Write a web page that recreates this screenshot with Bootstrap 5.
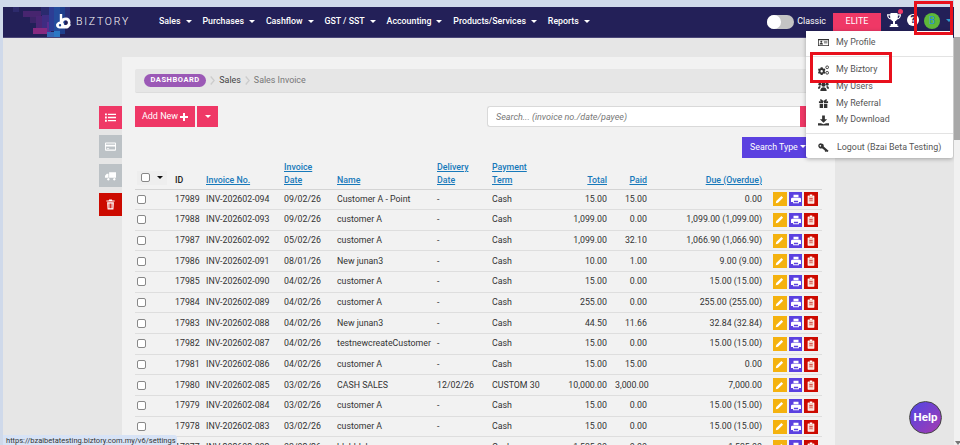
<!DOCTYPE html>
<html lang="en">
<head>
<meta charset="utf-8">
<title>Biztory - Sales Invoice</title>
<link href="https://cdn.jsdelivr.net/npm/bootstrap@5.3.0/dist/css/bootstrap.min.css" rel="stylesheet">
<style>
html,body{height:445px;overflow:hidden}
body{font-family:Roboto,"Liberation Sans",sans-serif;font-size:8.8px;color:#333;background:#e6e6e6}
.shell{position:relative;flex:1 1 auto;min-width:0;height:445px;padding:7px 0 0 3px;background:#cfd9ea;overflow:hidden}
.rail{width:6px;height:445px;background:#f1f1f1;position:relative;flex:none}
.rail-thumb{height:103px;margin-top:37px;background:#a8a8a8}
.rail-down{position:absolute;left:1px;bottom:0;width:0;height:0;border:3px solid transparent;border-top:4px solid #777;border-bottom:0}
.topbar{height:30.5px;background:#232058;padding:0;flex-wrap:nowrap;border-bottom:1px solid #4a4678;justify-content:flex-start;color:#fff;position:relative}
.mosaic{position:absolute;left:0;top:0}
.brand-box{position:relative;display:flex;align-items:center;width:156px;padding-left:53px;height:100%;color:#fff;font-size:10.5px;letter-spacing:1.8px;font-weight:300;text-decoration:none}
.brand-box svg{margin-right:5px}
.topmenu{display:flex;gap:0;margin:0;padding:0;list-style:none}
.topmenu a{display:block;color:#fff;text-decoration:none;font-size:8.8px;font-weight:500;white-space:nowrap}
.topmenu li{margin-right:10.9px}
.crt{display:inline-block;width:0;height:0;margin-left:5px;vertical-align:1.5px;border:3px solid transparent;border-top:3px solid currentColor;border-bottom:0}
.top-right{margin-left:auto;display:flex;align-items:center;height:100%;padding-right:2px;color:#fff}
.sw{width:27px;height:14px;border-radius:8px;background:#c4c4c4;position:relative;margin-right:3px}
.sw::before{content:"";position:absolute;left:0;top:0;width:14px;height:14px;border-radius:50%;background:#fff}
.classic-lbl{font-size:8.9px;margin-right:7px}
.elite{width:48px;height:24px;margin-top:6px;padding-bottom:6px;background:#ef3866;color:#fff;font-size:9px;font-weight:400;display:flex;align-items:center;justify-content:center;margin-right:6px}
.tro{position:relative;width:14px;height:16px;margin-right:6px;margin-bottom:4px}
.tro::after{content:"";position:absolute;right:-2px;top:-3px;width:5px;height:5px;border-radius:50%;background:#ef3866}
.qm{width:12px;height:12px;border-radius:50%;background:#fff;color:#232058;font-size:10px;font-weight:900;line-height:12px;text-align:center;margin-right:5px;margin-bottom:4px}
.ava{width:16px;height:16px;border-radius:50%;background:#5eb739;color:#2a8fd6;font-size:10px;text-align:center;line-height:16px;margin-right:6px;margin-bottom:2px}
.ava-c{color:#2f9bd0;margin-bottom:2px}
.ava-c .crt{margin:0;display:block}
.main-area{display:flex;align-items:flex-start;padding:19.5px 119px 0 96px;background:#e6e6e6;height:410px}
.side-tools{flex:none;width:23px;padding-top:49px;display:flex;flex-direction:column;gap:6px}
.stool{width:23px;height:23px;display:flex;align-items:center;justify-content:center;color:#fff}
.s-pink{background:#ef3866}.s-grey{background:#bcc2c6}.s-red{background:#cc0a00}
.sheet{flex:1 1 auto;min-width:0;height:400px;background:#f2f2f2;padding:12px 13px 0;overflow:hidden}
.crumbs{height:24px;background:#e6e6e6;border-bottom:1px solid #ddd;border-radius:2px;display:flex;align-items:center;padding-left:9px;margin-bottom:13px;font-size:8.9px;color:#444}
.pill-dash{background:#9b59b6;color:#fff;border-radius:9px;font-size:7.5px;font-weight:700;letter-spacing:.55px;padding:0 6.5px;height:12.5px;line-height:12.5px}
.chev{width:5px;height:9px;margin:0 4px;color:#ccc}
.crumbs .dim{color:#777}
.tool-row{display:flex;align-items:flex-start;height:21px}
.pbtn{background:#ef3866;color:#fff;border:0;border-radius:0;height:21px;font-size:9px;padding:0;display:flex;align-items:center;justify-content:center}
.add-btn{width:60px;margin-right:2px}
.add-btn svg{margin-left:2px}
.add-caret{width:21px}
.srch{margin-left:auto;width:313px;height:21px;background:#fff;border:1px solid #d9d9d9;border-right:0;border-radius:3px 0 0 3px;font-size:9px;font-style:italic;padding:0 8px;box-shadow:none}
.srch::placeholder{color:#777}
.srch-go{width:22px;height:21px;background:#ef3866;flex:none}
.type-row{display:flex;justify-content:flex-end;margin-top:10px;height:21px;padding-right:12px}
.type-btn{width:68px;height:21px;background:#5b41e0;color:#fff;border:0;border-radius:0;font-size:8.8px;padding:0 0 0 8px;text-align:left}
.type-btn .crt{margin-left:2px}
.inv-table{table-layout:fixed;width:687px;margin:2px 0 0;font-size:8.8px;color:#333;border-collapse:collapse;--bs-table-bg:transparent}
.inv-table>thead>tr>th{height:29px;padding:0 4px;border-bottom:1px solid #d4d4d4;font-weight:500;line-height:13px;vertical-align:bottom;padding-bottom:2px;color:#222}
.inv-table>tbody>tr>td{height:20.67px;padding:0 4px;border-bottom:1px solid #dedede;vertical-align:middle;white-space:nowrap;overflow:hidden}
.inv-table th a{color:#1779ba;text-decoration:underline}
.inv-table td.c0{padding-left:2px}
.inv-table .form-check-input{width:9px;height:9px;margin:0;display:block;border-color:#888;border-radius:2px;background-color:#fff}
.sel-all{display:flex;align-items:center;width:30px;height:14px;background:#eee;margin-left:-2px;margin-bottom:2px;padding-left:4px}
.sel-all .crt{color:#111;margin-left:7px;vertical-align:0}
.acts{display:flex;gap:2px;padding-left:3px}
.ab{width:14px;height:14px;display:flex;align-items:center;justify-content:center;color:#fff}
.ab-y{background:#f4b20f}.ab-b{background:#5b41e0}.ab-r{background:#cc0a00}
.user-menu{position:absolute;left:806px;top:31px;width:147px;height:127px;background:#fff;box-shadow:0 1px 4px rgba(0,0,0,.3);border-radius:0 0 2px 2px;color:#555;font-size:8.9px;padding:0;z-index:5;list-style:none;margin:0}
.mi{display:flex;align-items:center;height:16.7px;padding-left:12px;color:#555;text-decoration:none}
.mi svg{width:11px;height:11px;margin-right:7px;flex:none;color:#333}
.mi-first{margin-top:3px}
.msep{height:1px;background:#e3e3e3;margin:5px 0 5px}
.flagbox{position:absolute;border:3px solid #e8101c;z-index:6}
.flag-a{left:914px;top:1px;width:39px;height:34px}
.flag-b{left:810px;top:52px;width:82px;height:31px}
.fab{position:absolute;left:909px;top:401px;width:33px;height:33px;border-radius:50%;background:linear-gradient(135deg,#4f46e5,#a63ab0);border:1px solid #444;color:#fff;font-size:11.5px;font-weight:700;display:flex;align-items:center;justify-content:center;z-index:6}
.url-tip{position:absolute;left:3px;top:435px;height:10px;width:174px;background:#d7e3f6;color:#333;font-size:7.5px;line-height:12px;padding-left:3px;white-space:nowrap;overflow:hidden;z-index:7;border-radius:0 3px 0 0}
</style>
</head>
<body class="d-flex">
<svg width="0" height="0" class="position-absolute">
<defs>
<symbol id="i-list" viewBox="0 0 12 12"><path fill="currentColor" d="M0 1.500h2v2H0zM3.200 1.800H12v1.400H3.200zM0 5h2v2H0zM3.200 5.300H12v1.400H3.200zM0 8.500h2v2H0zM3.200 8.800H12v1.400H3.200z"/></symbol>
<symbol id="i-card" viewBox="0 0 12 12"><path fill="currentColor" fill-rule="evenodd" d="M1 1.500h10a1 1 0 0 1 1 1v7a1 1 0 0 1-1 1H1a1 1 0 0 1-1-1v-7a1 1 0 0 1 1-1zm0 1.300v1.300h10V2.800zm0 3.100v3.300h10V5.900zm1 1.800h2.500v.8H2z"/></symbol>
<symbol id="i-truck" viewBox="0 0 12 12"><path fill="currentColor" d="M4.500 2.500H12v6H4.500zM3.800 4.200H2L0 6.300v2.200h3.800zM3 9a1.300 1.300 0 1 1 0 2.200 1.300 1.300 0 0 1 0-2.200zM9.500 9a1.300 1.300 0 1 1 0 2.200 1.300 1.300 0 0 1 0-2.200z"/></symbol>
<symbol id="i-trash" viewBox="0 0 12 12"><path fill="currentColor" fill-rule="evenodd" d="M4.500.5h3l.5 1h2.500v1.300h-9V1.500H4zM2.300 3.500h7.400l-.5 8H2.800zM4 5v5h.9V5zm1.600 0v5h.9V5zM7.100 5v5H8V5z"/></symbol>
<symbol id="i-clip" viewBox="0 0 12 12"><path fill="#f5c9b8" d="M2.500 2h7v9.500h-7z"/><path fill="currentColor" d="M4.500.5h3v2h-3zM2 2h1.800v1.200H3.200v7.100h5.600V3.200h-.6V2H10v9.500H2z"/><path fill="#c33" d="M4 5h4v.9H4zM4 7h4v.9H4z"/></symbol>
<symbol id="i-pen" viewBox="0 0 12 12"><path fill="currentColor" d="M8.500 1.200l2.300 2.300-6.800 6.800-3 .7.700-3z"/></symbol>
<symbol id="i-print" viewBox="0 0 12 12"><path fill="currentColor" fill-rule="evenodd" d="M3 1h6v3H3zM1.500 4.500h9A1.500 1.500 0 0 1 12 6v3.500H9.500V11h-7V9.500H0V6a1.500 1.500 0 0 1 1.500-1.500zM3.500 8v2h5V8z"/></symbol>
<symbol id="i-id" viewBox="0 0 14 12"><path fill="currentColor" fill-rule="evenodd" d="M0 1.500h14v9H0zM1 3v6.500h12V3zM4.200 3.800a1.300 1.300 0 1 1 0 2.600 1.300 1.300 0 0 1 0-2.600zM2 8.500c0-1.200 1-1.800 2.200-1.800s2.200.6 2.200 1.800zM7.500 4.300H12v.9H7.500zM7.500 6H12v.9H7.500z"/></symbol>
<symbol id="i-cogs" viewBox="0 0 12 12"><path fill="currentColor" fill-rule="evenodd" d="M3 2.500h2l.3 1.100.9.500 1.100-.3.8 1.600-.8.800v1l.8.800-.8 1.600-1.100-.3-.9.500L5 11H3l-.3-1.200-.9-.5-1.100.3-.7-1.600.8-.8v-1l-.8-.8.700-1.600 1.100.3.900-.5zM4 5.500a1.300 1.300 0 1 0 0 2.600 1.300 1.300 0 0 0 0-2.600z"/><circle cx="10" cy="2.500" r="1.500" fill="none" stroke="currentColor"/><circle cx="10" cy="8.500" r="1.500" fill="none" stroke="currentColor"/></symbol>
<symbol id="i-users" viewBox="0 0 12 12"><circle cx="6" cy="4" r="2.300" fill="currentColor"/><circle cx="2" cy="3.500" r="1.600" fill="currentColor"/><circle cx="10" cy="3.500" r="1.600" fill="currentColor"/><path fill="currentColor" d="M2.500 11c0-3 1.500-4.300 3.500-4.300S9.500 8 9.500 11zM0 8.500c0-2 .8-3 2.300-3l.7 1C2.200 7.200 2 8 1.800 8.500zM12 8.500c0-2-.8-3-2.300-3l-.7 1c.8.700 1 1.500 1.200 2z"/></symbol>
<symbol id="i-gift" viewBox="0 0 12 12"><path fill="currentColor" d="M1 3.500h4.500v2H1zM6.500 3.500H11v2H6.500zM1.800 6.300h3.700V11H1.800zM6.500 6.300h3.700V11H6.500zM3 1l3 2.300L9 1l1 1.500-2 1.300H4L2 2.500z"/></symbol>
<symbol id="i-dl" viewBox="0 0 12 12"><path fill="currentColor" d="M4.500.5h3v4H10L6 8.500 2 4.500h2.500zM0 9h3.200L6 10l2.800-1H12v2.500H0z"/></symbol>
<symbol id="i-key" viewBox="0 0 12 12"><path fill="currentColor" fill-rule="evenodd" d="M3.500 1.500a2.800 2.800 0 0 1 2.700 3.500l5.300 4.500-1 1.500-1.200-.7-.8.600-1-.8-.2-1-3-2.300A2.800 2.800 0 1 1 3.500 1.500zM2.600 3.300a.9.900 0 1 0 0 1.800.9.900 0 0 0 0-1.800z"/></symbol>
<symbol id="i-trophy" viewBox="0 0 14 16"><path fill="currentColor" d="M3.500 1h7v1.200H14c0 3-1.300 4.800-3.900 5.300C9.500 8.500 8.700 9 8 9.300V12h2.300v1.800h1V15H2.700v-1.200h1V12H6V9.300c-.7-.3-1.500-.8-2.100-1.800C1.300 7 0 5.200 0 2.200h3.500zM1.300 3.400c.1 1.500.8 2.500 2 2.900-.1-.9-.2-1.900-.2-2.900zM12.700 3.400h-1.800c0 1-.1 2-.2 2.900 1.200-.4 1.900-1.400 2-2.900z"/></symbol>
</defs>
</svg>
<div class="shell">
<nav class="navbar topbar">
<svg class="mosaic" width="76" height="30" aria-hidden="true"><rect x="10" y="0" width="6" height="5" fill="#2d2a6c"/><rect x="20" y="4" width="18" height="6" fill="#47256f"/><rect x="27" y="10" width="6" height="6" fill="#3b2468"/><rect x="33" y="9" width="6" height="12" fill="#4b2575"/><rect x="30" y="21" width="14" height="6" fill="#872a80"/><rect x="38" y="0" width="8" height="8" fill="#2a2a6e"/><rect x="39" y="8" width="7" height="13" fill="#3f2c82"/><rect x="44" y="15" width="4" height="10" fill="#5a2d8e"/><rect x="46" y="0" width="5" height="24" fill="#2d3d94"/><rect x="51" y="0" width="6" height="30" fill="#244c9c"/><rect x="57" y="0" width="5" height="27" fill="#1f3f8c"/><rect x="62" y="0" width="5" height="14" fill="#2a2f78"/><rect x="44" y="25" width="7" height="5" fill="#3567b5"/><rect x="51" y="24" width="6" height="6" fill="#2b78c4"/></svg>
<a class="brand-box" href="#"><svg width="15" height="15" viewBox="0 0 15 15" aria-hidden="true"><path fill="#fff" fill-rule="evenodd" d="M3.800 0h2.400v4.500C7.300 3.800 8.600 3.500 10 3.500c2.600 0 4.500 2 4.500 4.700 0 .7-.1 1.300-.4 1.900L15 11l-1.200 1.200c-1 1.700-2 2.300-3.800 2.300H4C1.700 14.500 0 13 0 11c0-1.500 1.500-3 3.800-3.500zM4 10a1.200 1.200 0 1 0 0 2.400A1.200 1.200 0 0 0 4 10zM9.800 6.200C8.500 6.200 7.500 7 7.200 8.500c.6.700 1 1.500 1.100 2.500h1.600c1.200 0 2-1.200 2-2.500 0-1.300-.9-2.300-2.100-2.300z"/></svg>BIZTORY</a>
<ul class="topmenu">
<li><a href="#">Sales<span class="crt"></span></a></li>
<li><a href="#">Purchases<span class="crt"></span></a></li>
<li><a href="#">Cashflow<span class="crt"></span></a></li>
<li><a href="#">GST / SST<span class="crt"></span></a></li>
<li><a href="#">Accounting<span class="crt"></span></a></li>
<li><a href="#">Products/Services<span class="crt"></span></a></li>
<li><a href="#">Reports<span class="crt"></span></a></li>
</ul>
<div class="top-right">
<div class="sw"></div><span class="classic-lbl">Classic</span>
<div class="elite">ELITE</div>
<div class="tro"><svg width="14" height="16" aria-hidden="true"><use href="#i-trophy"/></svg></div>
<div class="qm">?</div>
<div class="ava">B</div>
<div class="ava-c"><span class="crt"></span></div>
</div>
</nav>
<div class="main-area">
<div class="side-tools">
<div class="stool s-pink"><svg width="11" height="11"><use href="#i-list"/></svg></div>
<div class="stool s-grey"><svg width="11" height="11"><use href="#i-card"/></svg></div>
<div class="stool s-grey"><svg width="11" height="11"><use href="#i-truck"/></svg></div>
<div class="stool s-red"><svg width="11" height="11"><use href="#i-trash"/></svg></div>
</div>
<div class="sheet">
<div class="crumbs"><span class="pill-dash">DASHBOARD</span><svg class="chev" viewBox="0 0 5 9"><path d="M.7.5l3.500 4-3.500 4" fill="none" stroke="currentColor" stroke-width="1.300"/></svg><span>Sales</span><svg class="chev" viewBox="0 0 5 9"><path d="M.7.5l3.500 4-3.500 4" fill="none" stroke="currentColor" stroke-width="1.300"/></svg><span class="dim">Sales Invoice</span></div>
<div class="tool-row">
<button class="btn pbtn add-btn" type="button">Add New<svg width="8" height="8" viewBox="0 0 8 8"><path fill="#fff" d="M3 0h2v3h3v2H5v3H3V5H0V3h3z"/></svg></button>
<button class="btn pbtn add-caret" type="button"><span class="crt m-0"></span></button>
<input class="form-control srch" placeholder="Search... (invoice no./date/payee)">
<div class="srch-go"></div>
</div>
<div class="type-row"><button class="btn type-btn" type="button">Search Type<span class="crt"></span></button></div>
<table class="table inv-table">
<colgroup><col style="width:36px"><col style="width:31px"><col style="width:78px"><col style="width:53px"><col style="width:100px"><col style="width:55px"><col style="width:60px"><col style="width:63px"><col style="width:40px"><col style="width:115px"><col style="width:56px"></colgroup>
<thead><tr>
<th><div class="sel-all"><input type="checkbox" class="form-check-input"><span class="crt"></span></div></th>
<th>ID</th><th><a href="#">Invoice No.</a></th><th><a href="#">Invoice Date</a></th><th><a href="#">Name</a></th><th><a href="#">Delivery Date</a></th><th><a href="#">Payment Term</a></th>
<th class="text-end"><a href="#">Total</a></th><th class="text-end"><a href="#">Paid</a></th><th class="text-end"><a href="#">Due (Overdue)</a></th><th></th>
</tr></thead>
<tbody>
<tr><td class="c0"><input type="checkbox" class="form-check-input"></td><td>17989</td><td>INV-202602-094</td><td>09/02/26</td><td>Customer A - Point</td><td>-</td><td>Cash</td><td class="text-end">15.00</td><td class="text-end">15.00</td><td class="text-end">0.00</td><td><div class="acts"><span class="ab ab-y"><svg width="9" height="9"><use href="#i-pen"/></svg></span><span class="ab ab-b"><svg width="10" height="10"><use href="#i-print"/></svg></span><span class="ab ab-r"><svg width="10" height="10"><use href="#i-clip"/></svg></span></div></td></tr>
<tr><td class="c0"><input type="checkbox" class="form-check-input"></td><td>17988</td><td>INV-202602-093</td><td>09/02/26</td><td>customer A</td><td>-</td><td>Cash</td><td class="text-end">1,099.00</td><td class="text-end">0.00</td><td class="text-end">1,099.00 (1,099.00)</td><td><div class="acts"><span class="ab ab-y"><svg width="9" height="9"><use href="#i-pen"/></svg></span><span class="ab ab-b"><svg width="10" height="10"><use href="#i-print"/></svg></span><span class="ab ab-r"><svg width="10" height="10"><use href="#i-clip"/></svg></span></div></td></tr>
<tr><td class="c0"><input type="checkbox" class="form-check-input"></td><td>17987</td><td>INV-202602-092</td><td>05/02/26</td><td>customer A</td><td>-</td><td>Cash</td><td class="text-end">1,099.00</td><td class="text-end">32.10</td><td class="text-end">1,066.90 (1,066.90)</td><td><div class="acts"><span class="ab ab-y"><svg width="9" height="9"><use href="#i-pen"/></svg></span><span class="ab ab-b"><svg width="10" height="10"><use href="#i-print"/></svg></span><span class="ab ab-r"><svg width="10" height="10"><use href="#i-clip"/></svg></span></div></td></tr>
<tr><td class="c0"><input type="checkbox" class="form-check-input"></td><td>17986</td><td>INV-202602-091</td><td>08/01/26</td><td>New junan3</td><td>-</td><td>Cash</td><td class="text-end">10.00</td><td class="text-end">1.00</td><td class="text-end">9.00 (9.00)</td><td><div class="acts"><span class="ab ab-y"><svg width="9" height="9"><use href="#i-pen"/></svg></span><span class="ab ab-b"><svg width="10" height="10"><use href="#i-print"/></svg></span><span class="ab ab-r"><svg width="10" height="10"><use href="#i-clip"/></svg></span></div></td></tr>
<tr><td class="c0"><input type="checkbox" class="form-check-input"></td><td>17985</td><td>INV-202602-090</td><td>04/02/26</td><td>customer A</td><td>-</td><td>Cash</td><td class="text-end">15.00</td><td class="text-end">0.00</td><td class="text-end">15.00 (15.00)</td><td><div class="acts"><span class="ab ab-y"><svg width="9" height="9"><use href="#i-pen"/></svg></span><span class="ab ab-b"><svg width="10" height="10"><use href="#i-print"/></svg></span><span class="ab ab-r"><svg width="10" height="10"><use href="#i-clip"/></svg></span></div></td></tr>
<tr><td class="c0"><input type="checkbox" class="form-check-input"></td><td>17984</td><td>INV-202602-089</td><td>04/02/26</td><td>customer A</td><td>-</td><td>Cash</td><td class="text-end">255.00</td><td class="text-end">0.00</td><td class="text-end">255.00 (255.00)</td><td><div class="acts"><span class="ab ab-y"><svg width="9" height="9"><use href="#i-pen"/></svg></span><span class="ab ab-b"><svg width="10" height="10"><use href="#i-print"/></svg></span><span class="ab ab-r"><svg width="10" height="10"><use href="#i-clip"/></svg></span></div></td></tr>
<tr><td class="c0"><input type="checkbox" class="form-check-input"></td><td>17983</td><td>INV-202602-088</td><td>04/02/26</td><td>New junan3</td><td>-</td><td>Cash</td><td class="text-end">44.50</td><td class="text-end">11.66</td><td class="text-end">32.84 (32.84)</td><td><div class="acts"><span class="ab ab-y"><svg width="9" height="9"><use href="#i-pen"/></svg></span><span class="ab ab-b"><svg width="10" height="10"><use href="#i-print"/></svg></span><span class="ab ab-r"><svg width="10" height="10"><use href="#i-clip"/></svg></span></div></td></tr>
<tr><td class="c0"><input type="checkbox" class="form-check-input"></td><td>17982</td><td>INV-202602-087</td><td>04/02/26</td><td>testnewcreateCustomer</td><td>-</td><td>Cash</td><td class="text-end">15.00</td><td class="text-end">0.00</td><td class="text-end">15.00 (15.00)</td><td><div class="acts"><span class="ab ab-y"><svg width="9" height="9"><use href="#i-pen"/></svg></span><span class="ab ab-b"><svg width="10" height="10"><use href="#i-print"/></svg></span><span class="ab ab-r"><svg width="10" height="10"><use href="#i-clip"/></svg></span></div></td></tr>
<tr><td class="c0"><input type="checkbox" class="form-check-input"></td><td>17981</td><td>INV-202602-086</td><td>04/02/26</td><td>customer A</td><td>-</td><td>Cash</td><td class="text-end">15.00</td><td class="text-end">15.00</td><td class="text-end">0.00</td><td><div class="acts"><span class="ab ab-y"><svg width="9" height="9"><use href="#i-pen"/></svg></span><span class="ab ab-b"><svg width="10" height="10"><use href="#i-print"/></svg></span><span class="ab ab-r"><svg width="10" height="10"><use href="#i-clip"/></svg></span></div></td></tr>
<tr><td class="c0"><input type="checkbox" class="form-check-input"></td><td>17980</td><td>INV-202602-085</td><td>03/02/26</td><td>CASH SALES</td><td>12/02/26</td><td>CUSTOM 30</td><td class="text-end">10,000.00</td><td class="text-end">3,000.00</td><td class="text-end">7,000.00</td><td><div class="acts"><span class="ab ab-y"><svg width="9" height="9"><use href="#i-pen"/></svg></span><span class="ab ab-b"><svg width="10" height="10"><use href="#i-print"/></svg></span><span class="ab ab-r"><svg width="10" height="10"><use href="#i-clip"/></svg></span></div></td></tr>
<tr><td class="c0"><input type="checkbox" class="form-check-input"></td><td>17979</td><td>INV-202602-084</td><td>03/02/26</td><td>customer A</td><td>-</td><td>Cash</td><td class="text-end">15.00</td><td class="text-end">0.00</td><td class="text-end">15.00 (15.00)</td><td><div class="acts"><span class="ab ab-y"><svg width="9" height="9"><use href="#i-pen"/></svg></span><span class="ab ab-b"><svg width="10" height="10"><use href="#i-print"/></svg></span><span class="ab ab-r"><svg width="10" height="10"><use href="#i-clip"/></svg></span></div></td></tr>
<tr><td class="c0"><input type="checkbox" class="form-check-input"></td><td>17978</td><td>INV-202602-083</td><td>03/02/26</td><td>customer A</td><td>-</td><td>Cash</td><td class="text-end">15.00</td><td class="text-end">0.00</td><td class="text-end">15.00 (15.00)</td><td><div class="acts"><span class="ab ab-y"><svg width="9" height="9"><use href="#i-pen"/></svg></span><span class="ab ab-b"><svg width="10" height="10"><use href="#i-print"/></svg></span><span class="ab ab-r"><svg width="10" height="10"><use href="#i-clip"/></svg></span></div></td></tr>
<tr><td class="c0"><input type="checkbox" class="form-check-input"></td><td>17977</td><td>INV-202602-082</td><td>03/02/26</td><td>blahblah</td><td>-</td><td>Cash</td><td class="text-end">1,535.00</td><td class="text-end">0.00</td><td class="text-end">1,535.00</td><td><div class="acts"><span class="ab ab-y"><svg width="9" height="9"><use href="#i-pen"/></svg></span><span class="ab ab-b"><svg width="10" height="10"><use href="#i-print"/></svg></span><span class="ab ab-r"><svg width="10" height="10"><use href="#i-clip"/></svg></span></div></td></tr>
</tbody>
</table>
</div>
</div>
<ul class="user-menu">
<li><a class="mi mi-first" href="#"><svg viewBox="0 0 14 12"><use href="#i-id"/></svg>My Profile</a></li>
<li class="msep"></li>
<li><a class="mi" href="#"><svg><use href="#i-cogs"/></svg>My Biztory</a></li>
<li><a class="mi" href="#"><svg><use href="#i-users"/></svg>My Users</a></li>
<li><a class="mi" href="#"><svg><use href="#i-gift"/></svg>My Referral</a></li>
<li><a class="mi" href="#"><svg><use href="#i-dl"/></svg>My Download</a></li>
<li class="msep"></li>
<li><a class="mi" href="#"><svg class="me-2"><use href="#i-key"/></svg>Logout (Bzai Beta Testing)</a></li>
</ul>
<div class="flagbox flag-a"></div>
<div class="flagbox flag-b"></div>
<div class="fab">Help</div>
<div class="url-tip">https://bzaibetatesting.biztory.com.my/v6/settings</div>
</div>
<div class="rail"><div class="rail-thumb"></div><div class="rail-down"></div></div>
<script src="https://cdn.jsdelivr.net/npm/bootstrap@5.3.0/dist/js/bootstrap.bundle.min.js"></script>
</body>
</html>
